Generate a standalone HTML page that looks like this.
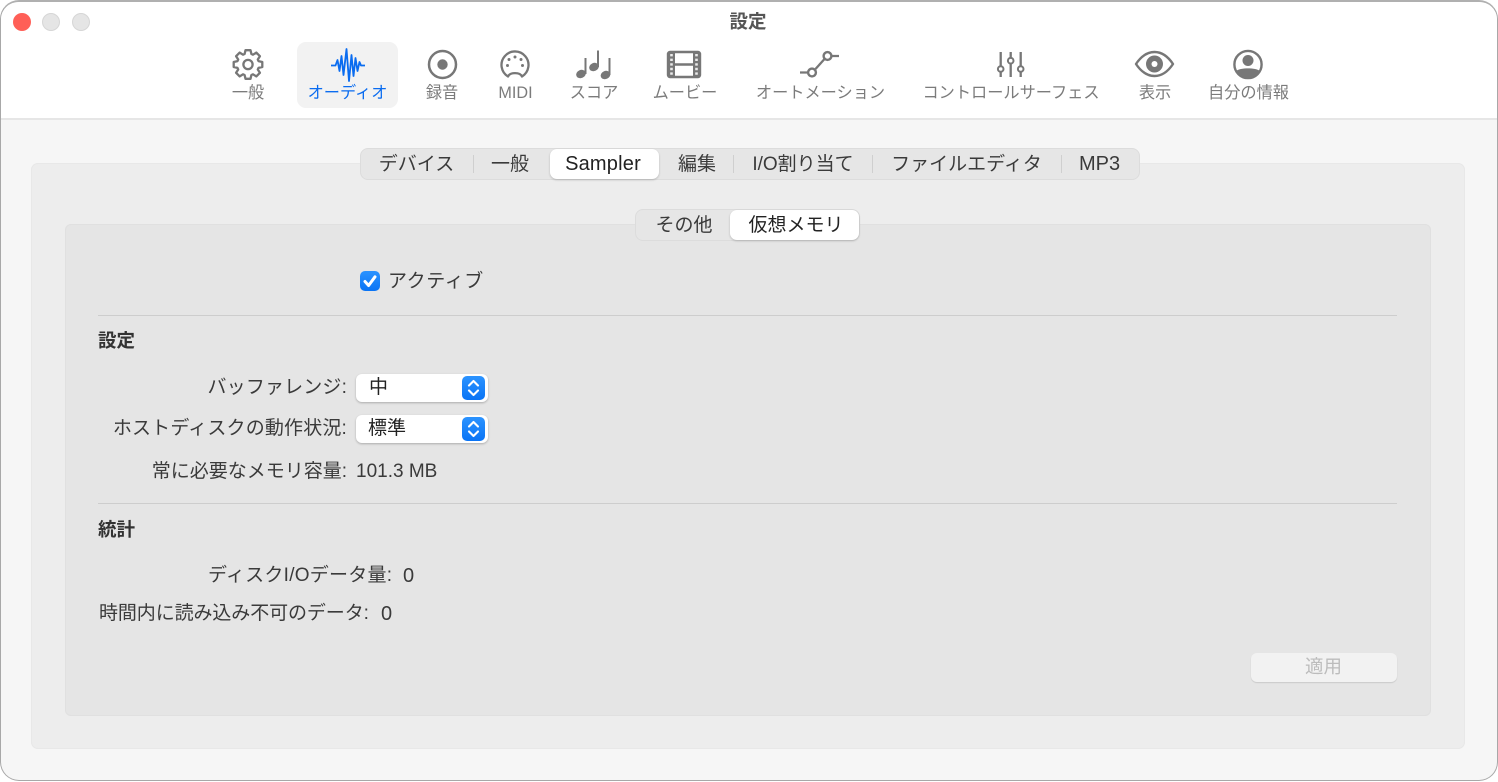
<!DOCTYPE html>
<html lang="ja"><head><meta charset="utf-8"><title>設定</title>
<style>
html,body{margin:0;padding:0;background:#fff;width:1498px;height:782px;overflow:hidden}
body{position:relative;font-family:"Liberation Sans","Noto Sans CJK JP",sans-serif;color:#333}
.abs{position:absolute;box-sizing:border-box}
.t{position:absolute;white-space:nowrap;line-height:26px;height:26px}
.c{transform:translateX(-50%)}
.tb{font-size:16.2px;color:#7b7b7b;top:80px}
.seg{font-size:19px;color:#3a3a3a;top:152px}
.lab{font-size:19px;color:#3a3a3a}
.sep{position:absolute;width:1px;background:#cfcfcf;top:155px;height:18px}
.pop{position:absolute;left:356px;width:132px;height:28px;background:#fff;border-radius:6px;box-shadow:0 1px 2px rgba(0,0,0,.25)}
.pop i{position:absolute;left:106px;top:2px;width:23px;height:24px;border-radius:5px;background:linear-gradient(#2b93ff,#0a74f5)}
.pop svg{position:absolute;left:0;top:0}
</style></head><body>
<div class="abs" style="left:0;top:0;width:1498px;height:781px;background:#f6f6f6;border:1px solid #a8a8a8;border-top:2px solid #b0b0b0;border-radius:19px;overflow:hidden">
  <div class="abs" style="left:0;top:0;width:1496px;height:118px;background:#fff;border-bottom:2px solid #e6e6e6"></div>
</div>

<div class="abs" style="left:13px;top:13px;width:18px;height:18px;border-radius:50%;background:#ff5f57"></div>
<div class="abs" style="left:42px;top:13px;width:18px;height:18px;border-radius:50%;background:#e5e5e5;border:1px solid #d6d6d6"></div>
<div class="abs" style="left:72px;top:13px;width:18px;height:18px;border-radius:50%;background:#e5e5e5;border:1px solid #d6d6d6"></div>
<div class="t c" style="left:748px;top:9px;font-size:18.5px;font-weight:700;color:#555">設定</div>

<div class="abs" style="left:297px;top:42px;width:101px;height:66px;border-radius:9px;background:#f2f2f2"></div>

<svg class="abs" style="left:0;top:0" width="1498" height="120" viewBox="0 0 1498 120" fill="none" stroke="#777" stroke-width="2.2">
  <g transform="translate(248,64.5)" stroke-linejoin="round" stroke-width="2.3">
    <path d="M-2.5-14.3L2.5-14.3L3.4-10.5L5-9.8L8.3-11.9L11.9-8.3L9.8-5L10.5-3.4L14.3-2.5L14.3 2.5L10.5 3.4L9.8 5L11.9 8.3L8.3 11.9L5 9.8L3.4 10.5L2.5 14.3L-2.5 14.3L-3.4 10.5L-5 9.8L-8.3 11.9L-11.9 8.3L-9.8 5L-10.5 3.4L-14.3 2.5L-14.3-2.5L-10.5-3.4L-9.8-5L-11.9-8.3L-8.3-11.9L-5-9.8L-3.4-10.5Z"/>
    <circle r="4.6"/>
  </g>
  <path d="M331 65.5H335.5L337.5 60L339.5 71L341.5 56L343.5 75L346.5 49L349 81L351.5 55L353.5 76L355.5 58L357.5 71L359.5 62L361 65.5H365" stroke="#0a6cf0" stroke-width="1.8" stroke-linejoin="round"/>
  <circle cx="442.5" cy="64.5" r="13.5" stroke-width="2.5"/>
  <circle cx="442.5" cy="64.5" r="5.2" fill="#777" stroke="none"/>
  <path d="M508 76.5A13.5 13.5 0 1 1 522 76.5C520 72 510 72 508 76.5Z" stroke-width="2.3" stroke-linejoin="round"/>
  <g fill="#777" stroke="none">
    <circle cx="515" cy="57" r="1.5"/><circle cx="509" cy="59.5" r="1.5"/><circle cx="521" cy="59.5" r="1.5"/><circle cx="507.5" cy="65.5" r="1.5"/><circle cx="522.5" cy="65.5" r="1.5"/>
    <ellipse cx="581" cy="74" rx="5" ry="4" transform="rotate(-25 581 74)"/>
    <ellipse cx="594" cy="67" rx="5" ry="4" transform="rotate(-25 594 67)"/>
    <ellipse cx="605.5" cy="75" rx="5" ry="4" transform="rotate(-25 605.5 75)"/>
  </g>
  <path d="M585.5 58V74M598 50.5V67M609.5 58V75" stroke-width="2"/>
  <rect x="668" y="52" width="32" height="25" rx="2" stroke-width="2.4"/>
  <rect x="668" y="52" width="7" height="25" fill="#777" stroke="none"/>
  <rect x="693" y="52" width="7" height="25" fill="#777" stroke="none"/>
  <path d="M675 64.5H693" stroke-width="2.4"/>
  <path d="M671.5 54V76M696.5 54V76" stroke="#fff" stroke-width="2.6" stroke-dasharray="2.4 2.2" opacity=".85"/>
  <path d="M800 72.5H808M815.5 69L824.5 59M832 56H839" stroke-width="2.3"/>
  <circle cx="812" cy="72.5" r="3.9" stroke-width="2.4"/>
  <circle cx="827.5" cy="56" r="3.9" stroke-width="2.4"/>
  <path d="M1000.7 52V66M1000.7 72V77M1010.7 52V58M1010.7 64V77M1020.7 52V66M1020.7 72V77" stroke-width="2.3"/>
  <circle cx="1000.7" cy="69" r="2.8" stroke-width="2"/><circle cx="1010.7" cy="60.7" r="2.8" stroke-width="2"/><circle cx="1020.7" cy="69" r="2.8" stroke-width="2"/>
  <path d="M1136 64C1142 55 1148 52 1154.5 52C1161 52 1167 55 1173 64C1167 73 1161 76 1154.5 76C1148 76 1142 73 1136 64Z" stroke-width="2.4" stroke-linejoin="round"/>
  <circle cx="1154.5" cy="64" r="8.5" fill="#777" stroke="none"/><circle cx="1154.5" cy="64" r="3" fill="#fff" stroke="none"/>
  <circle cx="1248" cy="64.5" r="13.6" stroke-width="2.4"/>
  <circle cx="1248" cy="60.5" r="5.5" fill="#777" stroke="none"/>
  <path d="M1236.1 71C1240 67.5 1256 67.5 1259.9 71A13.6 13.6 0 0 1 1236.1 71Z" fill="#777" stroke="none"/>
</svg>

<div class="t c tb" style="left:248px">一般</div>
<div class="t c tb" style="left:347.5px;color:#0a6cf0">オーディオ</div>
<div class="t c tb" style="left:442px">録音</div>
<div class="t c tb" style="left:515.5px">MIDI</div>
<div class="t c tb" style="left:594px">スコア</div>
<div class="t c tb" style="left:685px">ムービー</div>
<div class="t c tb" style="left:820.5px">オートメーション</div>
<div class="t c tb" style="left:1011px">コントロールサーフェス</div>
<div class="t c tb" style="left:1155px">表示</div>
<div class="t c tb" style="left:1248.5px">自分の情報</div>

<div class="abs" style="left:31px;top:163px;width:1434px;height:586px;background:#ededed;border-radius:7px;box-shadow:inset 0 0 0 1px #e8e8e8"></div>
<div class="abs" style="left:65px;top:224px;width:1366px;height:492px;background:#e5e5e5;border-radius:6px;box-shadow:inset 0 0 0 1px #e0e0e0"></div>

<div class="abs" style="left:360px;top:148px;width:780px;height:32px;background:#e6e6e6;border-radius:8px;border:1px solid #dcdcdc"></div>
<div class="abs" style="left:550px;top:149px;width:109px;height:30px;background:#fff;border-radius:7px;box-shadow:0 1px 2px rgba(0,0,0,.2)"></div>
<div class="sep" style="left:473px"></div><div class="sep" style="left:733px"></div><div class="sep" style="left:872px"></div><div class="sep" style="left:1061px"></div>
<div class="t c seg" style="left:416.5px">デバイス</div>
<div class="t c seg" style="left:510px">一般</div>
<div class="t c seg" style="left:603px;top:151px;font-size:20px;letter-spacing:.2px;color:#222">Sampler</div>
<div class="t c seg" style="left:697px">編集</div>
<div class="t c seg" style="left:803px">I/O割り当て</div>
<div class="t c seg" style="left:966.5px">ファイルエディタ</div>
<div class="t c seg" style="left:1099.5px;top:151px;font-size:20px">MP3</div>

<div class="abs" style="left:635px;top:209px;width:225px;height:32px;background:#e6e6e6;border-radius:8px;border:1px solid #dcdcdc"></div>
<div class="abs" style="left:730px;top:210px;width:129px;height:30px;background:#fff;border-radius:7px;box-shadow:0 1px 2px rgba(0,0,0,.2)"></div>
<div class="t c seg" style="left:684px;top:213px">その他</div>
<div class="t c seg" style="left:796px;top:213px;color:#222">仮想メモリ</div>

<div class="abs" style="left:360px;top:271px;width:20px;height:20px;border-radius:5px;background:linear-gradient(#2b93ff,#0a74f5)"></div>
<svg class="abs" style="left:360px;top:271px" width="20" height="20" fill="none"><path d="M5 10.5L8.6 14.5L15 5.8" stroke="#fff" stroke-width="3" stroke-linecap="round" stroke-linejoin="round"/></svg>
<div class="t lab" style="left:388px;top:269px;letter-spacing:.6px">アクティブ</div>

<div class="abs" style="left:98px;top:315px;width:1299px;height:1px;background:#cdcdcd"></div>
<div class="t" style="left:98px;top:328px;font-size:18.5px;font-weight:700;color:#333">設定</div>

<div class="t lab" style="right:1151px;top:375px;letter-spacing:.15px">バッファレンジ:</div>
<div class="pop" style="top:374px"><i></i><svg width="132" height="28" fill="none"><path d="M113 11.5L117.5 7L122 11.5M113 16.5L117.5 21L122 16.5" stroke="#fff" stroke-width="2.1" stroke-linecap="round" stroke-linejoin="round"/></svg></div>
<div class="t lab" style="left:369px;top:375px;color:#222">中</div>

<div class="t lab" style="right:1151px;top:416px;letter-spacing:.17px">ホストディスクの動作状況:</div>
<div class="pop" style="top:415px"><i></i><svg width="132" height="28" fill="none"><path d="M113 11.5L117.5 7L122 11.5M113 16.5L117.5 21L122 16.5" stroke="#fff" stroke-width="2.1" stroke-linecap="round" stroke-linejoin="round"/></svg></div>
<div class="t lab" style="left:368px;top:416px;color:#222">標準</div>

<div class="t lab" style="right:1151px;top:459px">常に必要なメモリ容量:</div>
<div class="t lab" style="left:356px;top:459px">101.3 MB</div>

<div class="abs" style="left:98px;top:503px;width:1299px;height:1px;background:#cdcdcd"></div>
<div class="t" style="left:98px;top:517px;font-size:18.5px;font-weight:700;color:#333">統計</div>

<div class="t lab" style="left:208px;top:563px;letter-spacing:.25px">ディスクI/Oデータ量:</div>
<div class="t lab" style="left:403px;top:563px;font-size:20px">0</div>
<div class="t lab" style="left:99px;top:601px;letter-spacing:-.1px">時間内に読み込み不可のデータ:</div>
<div class="t lab" style="left:381px;top:601px;font-size:20px">0</div>

<div class="abs" style="left:1251px;top:653px;width:146px;height:29px;background:#f2f2f2;border-radius:6px;box-shadow:0 1px 1px rgba(0,0,0,.12)"></div>
<div class="t c" style="left:1323.5px;top:654px;font-size:18.5px;color:#bcbcbc">適用</div>
</body></html>
